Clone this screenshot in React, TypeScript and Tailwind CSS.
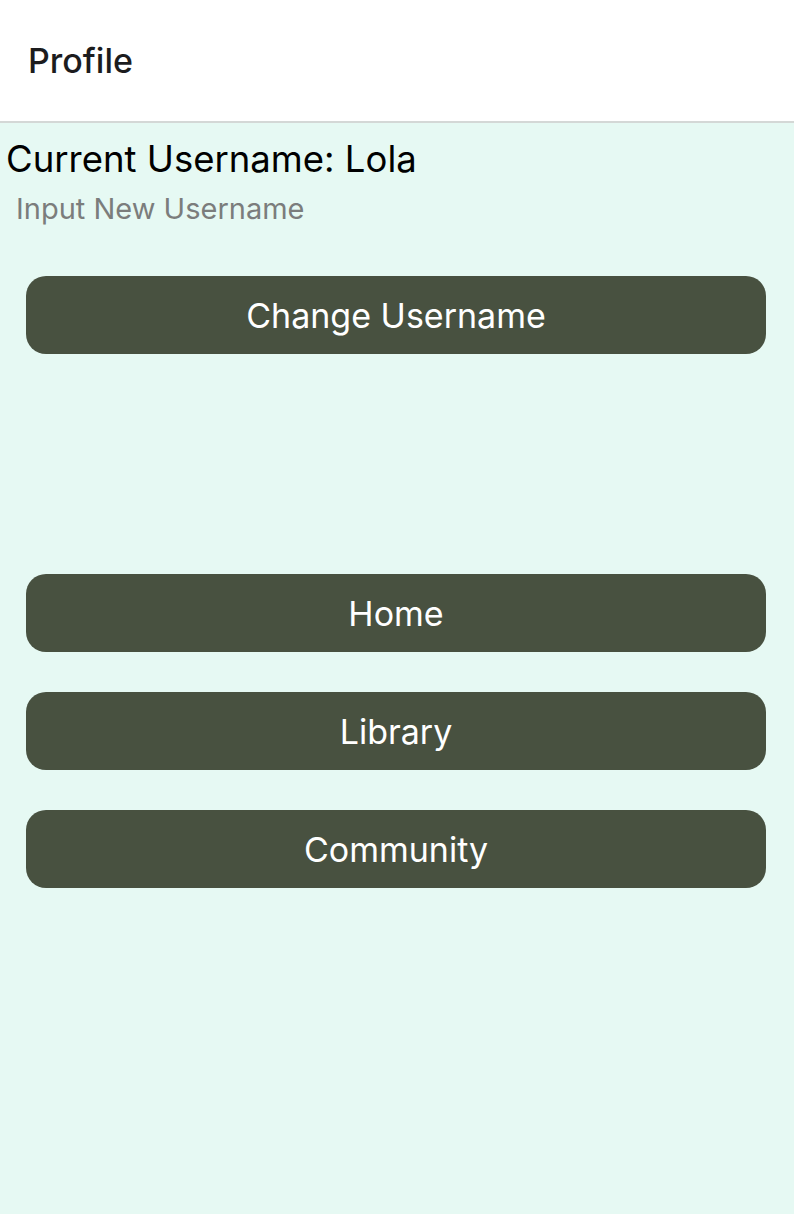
export default function App() {
    const navItems = ["Home", "Library", "Community"];

    return (
        <div className="min-h-[1214px] flex flex-col bg-[#e6f9f3] font-['Inter',sans-serif]">
            <header className="h-[123px] bg-white border-b-2 border-[#d4d8d6] flex items-center px-[28px]">
                <h1 className="text-[34px] font-medium text-[#1c1c1e]">Profile</h1>
            </header>

            <div className="px-[6px] pt-[14px]">
                <p className="text-[36.5px] leading-[44px] text-black">Current Username: Lola</p>
                <input
                    type="text"
                    placeholder="Input New Username"
                    className="mt-[8px] ml-[10px] w-[760px] h-[40px] text-[29px] bg-transparent outline-none placeholder:text-[#7b7d7c]"
                />
            </div>

            <div className="pl-[26px] pr-[28px] mt-[47px]">
                <button className="w-full h-[78px] rounded-[20px] bg-[#485140] text-white text-[34px]">
                    Change Username
                </button>
            </div>

            <div className="pl-[26px] pr-[28px] mt-[220px] flex flex-col gap-[40px]">
                {navItems.map((item) => (
                    <button key={item} className="w-full h-[78px] rounded-[20px] bg-[#485140] text-white text-[34px]">
                        {item}
                    </button>
                ))}
            </div>
        </div>
    );
}
